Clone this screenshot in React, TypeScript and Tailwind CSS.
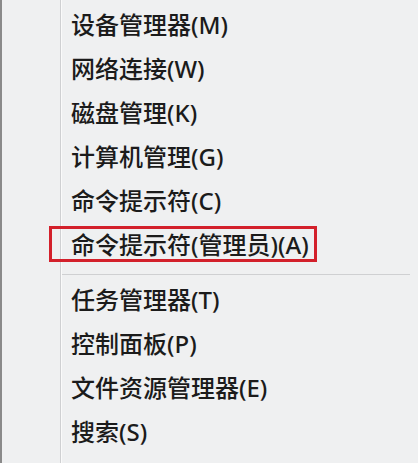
import React from 'react';

// 右键开始菜单 (Win+X)
const GROUP_A = [
  '设备管理器(M)',
  '网络连接(W)',
  '磁盘管理(K)',
  '计算机管理(G)',
  '命令提示符(C)',
  '命令提示符(管理员)(A)',
];

const GROUP_B = ['任务管理器(T)', '控制面板(P)', '文件资源管理器(E)', '搜索(S)'];

const MenuItem: React.FC<{ label: string; highlight?: boolean }> = ({ label, highlight }) => (
  <div className="relative h-[44px] leading-[44px] pl-[9px] text-[24px] font-medium text-[#1b1b1b] whitespace-nowrap">
    {highlight && (
      <span className="absolute left-[-13px] top-[3px] w-[268px] h-[36px] border-[3px] border-[#d3202b]" />
    )}
    {label}
  </div>
);

const App: React.FC = () => {
  return (
    <div
      className="w-[418px] h-[463px] bg-[#eff0f1] flex overflow-hidden"
      style={{ fontFamily: '"Noto Sans", "Noto Sans CJK SC", sans-serif' }}
    >
      <div className="w-[2px] bg-[#8a8a8a]" />
      <div className="w-[58px] bg-[#eff0f1]" />
      <div className="w-px bg-[#cfd0d2]" />
      <div className="w-px bg-[#fafafa]" />
      <div className="flex-1 pt-[3px]">
        {GROUP_A.map((label, i) => (
          <MenuItem key={label} label={label} highlight={i === GROUP_A.length - 1} />
        ))}
        <div className="pt-[7px] pb-[3px] pr-[8px]">
          <div className="h-px bg-[#cfd0d2]" />
        </div>
        {GROUP_B.map(label => (
          <MenuItem key={label} label={label} />
        ))}
      </div>
    </div>
  );
};

export default App;
